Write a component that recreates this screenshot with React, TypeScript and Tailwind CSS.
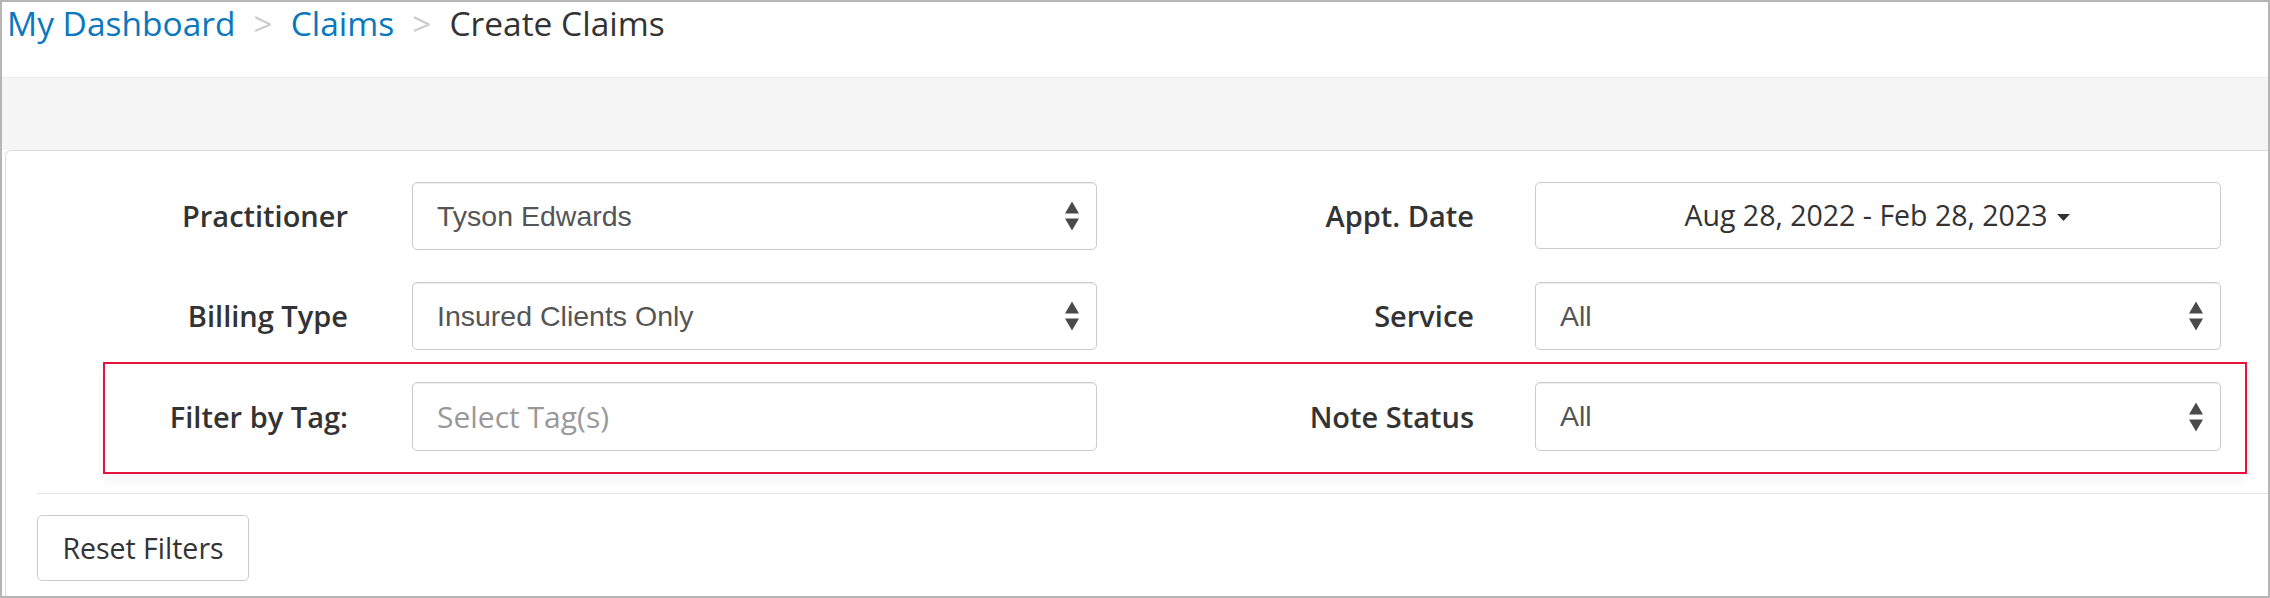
import React from "react";

const OPEN = { fontFamily: '"Open Sans", "Liberation Sans", sans-serif' };
const ARIAL = { fontFamily: '"Liberation Sans", Arial, sans-serif' };

function Arrows() {
  return (
    <svg width="14" height="29" viewBox="0 0 14 29" className="absolute right-[17px] top-1/2 -translate-y-1/2">
      <polygon points="0,12 7,0 14,12" fill="#4a4a4a" />
      <polygon points="0,17 14,17 7,29" fill="#4a4a4a" />
    </svg>
  );
}

function SelectBox({ value, w }: { value: string; w: string }) {
  return (
    <div
      className={`relative ${w} h-[68px] border border-[#cccccc] rounded-[5px] bg-white flex items-center pl-[24px] shadow-[inset_0_1px_1px_rgba(0,0,0,0.075)]`}
    >
      <span className="text-[28.5px] text-[#555555]" style={ARIAL}>
        {value}
      </span>
      <Arrows />
    </div>
  );
}

function Label({ text, w }: { text: string; w: string }) {
  return (
    <div className={`${w} flex items-center justify-end text-[29px] font-semibold text-[#333333]`}>
      {text}
    </div>
  );
}

export default function App() {
  return (
    <div
      className="w-[2270px] h-[598px] border-2 border-[#b5b5b5] overflow-hidden bg-white flex flex-col"
      style={OPEN}
    >
      {/* Breadcrumb */}
      <div className="h-[75px] shrink-0 pl-[5px] pt-[5px] text-[33.5px] leading-[32px] flex items-start whitespace-nowrap">
        <span className="text-[#0b78bd]">My Dashboard</span>
        <span className="text-[#cccccc] mx-[18px]">&gt;</span>
        <span className="text-[#0b78bd]">Claims</span>
        <span className="text-[#cccccc] mx-[18px]">&gt;</span>
        <span className="text-[#333333]">Create Claims</span>
      </div>

      {/* Gray band */}
      <div className="h-[73px] shrink-0 bg-[#f5f5f5] border-t border-[#ececec]" />

      {/* Panel */}
      <div className="flex-1 ml-[3px] bg-white border-l border-t border-[#dddddd] rounded-tl-[6px] pt-[31px]">
        <div className="flex flex-col gap-[32px] w-[2215px]">
          {/* Row 1 */}
          <div className="flex h-[68px]">
            <Label text="Practitioner" w="w-[342px]" />
            <div className="ml-[64px]">
              <SelectBox value="Tyson Edwards" w="w-[685px]" />
            </div>
            <Label text="Appt. Date" w="w-[377px]" />
            <div className="ml-[61px]">
              <div className="w-[686px] h-[67px] border border-[#cccccc] rounded-[5px] bg-white flex items-center justify-center text-[28.5px] text-[#333333] pr-[2px]">
                <span>Aug 28, 2022 - Feb 28, 2023</span>
                <svg width="13" height="7" viewBox="0 0 13 7" className="ml-[9px] mt-[3px]">
                  <polygon points="0,0 13,0 6.5,7" fill="#333333" />
                </svg>
              </div>
            </div>
          </div>

          {/* Row 2 */}
          <div className="flex h-[68px]">
            <Label text="Billing Type" w="w-[342px]" />
            <div className="ml-[64px]">
              <SelectBox value="Insured Clients Only" w="w-[685px]" />
            </div>
            <Label text="Service" w="w-[377px]" />
            <div className="ml-[61px]">
              <SelectBox value="All" w="w-[686px]" />
            </div>
          </div>

          {/* Row 3 with highlight */}
          <div className="relative flex h-[69px]">
            <div className="absolute left-[97px] -right-[26px] -top-[20px] -bottom-[23px] border-2 border-[#e8123f] shadow-[0_6px_12px_rgba(0,0,0,0.05)] pointer-events-none" />
            <Label text="Filter by Tag:" w="w-[342px]" />
            <div className="ml-[64px]">
              <div className="w-[685px] h-[69px] border border-[#cccccc] rounded-[5px] bg-white flex items-center pl-[24px] shadow-[inset_0_1px_1px_rgba(0,0,0,0.075)]">
                <span className="text-[30px] text-[#999999]">Select Tag(s)</span>
              </div>
            </div>
            <Label text="Note Status" w="w-[377px]" />
            <div className="ml-[61px]">
              <div className="relative w-[686px] h-[69px] border border-[#cccccc] rounded-[5px] bg-white flex items-center pl-[24px] shadow-[inset_0_1px_1px_rgba(0,0,0,0.075)]">
                <span className="text-[28.5px] text-[#555555]" style={ARIAL}>
                  All
                </span>
                <Arrows />
              </div>
            </div>
          </div>
        </div>

        {/* Divider */}
        <div className="ml-[31px] mt-[42px] border-t border-[#e5e5e5]" />

        {/* Reset button */}
        <div className="ml-[31px] mt-[21px]">
          <button className="w-[212px] h-[66px] border border-[#cccccc] rounded-[5px] bg-white text-[28.5px] text-[#333333] flex items-center justify-center">
            Reset Filters
          </button>
        </div>
      </div>
    </div>
  );
}
